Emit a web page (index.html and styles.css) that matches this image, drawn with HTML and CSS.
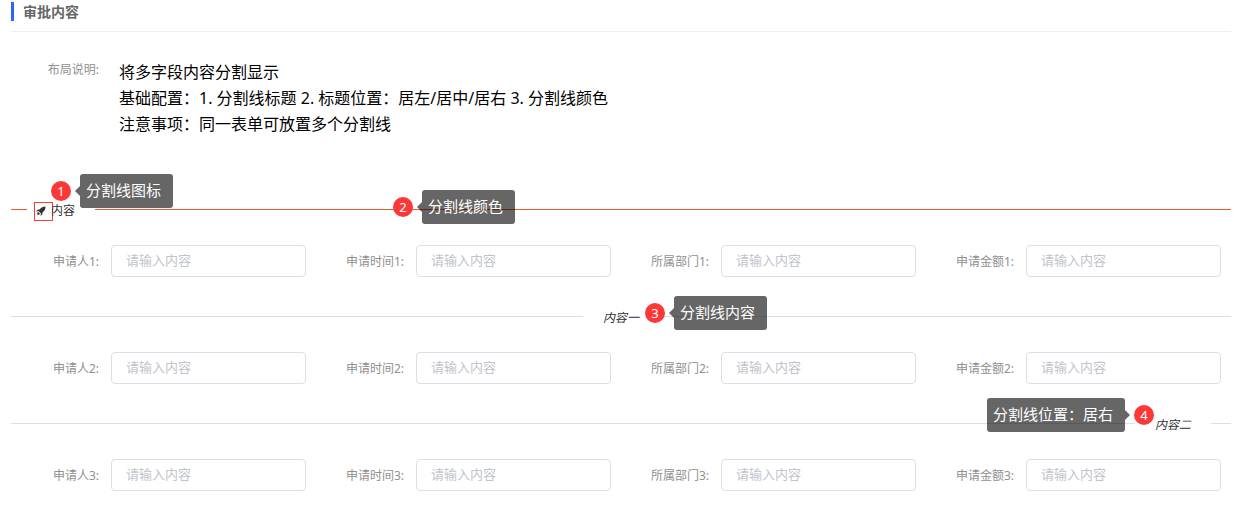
FILE: index.html
```html
<!DOCTYPE html>
<html lang="zh-CN">
<head>
    <meta charset="UTF-8">
    <meta name="viewport" content="width=device-width, initial-scale=1.0">
    <title>审批内容</title>
    <link rel="stylesheet" href="styles.css">
</head>
<body>
    <main class="page">
        <h1 class="page-title">审批内容</h1>

        <section class="intro">
            <div class="intro-label">布局说明:</div>
            <div class="intro-text">
                <p>将多字段内容分割显示</p>
                <p>基础配置：1. 分割线标题 2. 标题位置：居左/居中/居右 3. 分割线颜色</p>
                <p>注意事项：同一表单可放置多个分割线</p>
            </div>
        </section>

        <form>
            <div class="divider divider-left">
                <div class="divider-text">
                    <span class="icon-box">
                        <svg class="icon" viewBox="0 0 20 20" fill="currentColor" aria-hidden="true">
                            <path d="M19 1C14 1 10 3 7 7 4 7 2 8 0 11l5-1 5 5-1 5c3-2 4-4 4-7 4-3 6-7 6-12z"/>
                            <path d="M4 11.500c-1 1.500-1.500 3-1.500 6 3 0 4.500-.5 6-1.500z"/>
                        </svg>
                    </span>
                    内容
                </div>
                <div class="note note-icon"><span class="badge">1</span><span class="tip">分割线图标</span></div>
                <div class="note note-color"><span class="badge">2</span><span class="tip">分割线颜色</span></div>
            </div>
            <div class="fields">
                <div class="field"><label for="user1">申请人1:</label><input type="text" id="user1" placeholder="请输入内容"></div>
                <div class="field"><label for="time1">申请时间1:</label><input type="text" id="time1" placeholder="请输入内容"></div>
                <div class="field"><label for="dept1">所属部门1:</label><input type="text" id="dept1" placeholder="请输入内容"></div>
                <div class="field"><label for="amount1">申请金额1:</label><input type="text" id="amount1" placeholder="请输入内容"></div>
            </div>

            <div class="divider divider-center">
                <div class="divider-text">
                    内容一
                    <div class="note note-content"><span class="badge">3</span><span class="tip">分割线内容</span></div>
                </div>
            </div>
            <div class="fields">
                <div class="field"><label for="user2">申请人2:</label><input type="text" id="user2" placeholder="请输入内容"></div>
                <div class="field"><label for="time2">申请时间2:</label><input type="text" id="time2" placeholder="请输入内容"></div>
                <div class="field"><label for="dept2">所属部门2:</label><input type="text" id="dept2" placeholder="请输入内容"></div>
                <div class="field"><label for="amount2">申请金额2:</label><input type="text" id="amount2" placeholder="请输入内容"></div>
            </div>

            <div class="divider divider-right">
                <div class="divider-text">内容二</div>
                <div class="note note-position"><span class="badge">4</span><span class="tip">分割线位置：居右</span></div>
            </div>
            <div class="fields">
                <div class="field"><label for="user3">申请人3:</label><input type="text" id="user3" placeholder="请输入内容"></div>
                <div class="field"><label for="time3">申请时间3:</label><input type="text" id="time3" placeholder="请输入内容"></div>
                <div class="field"><label for="dept3">所属部门3:</label><input type="text" id="dept3" placeholder="请输入内容"></div>
                <div class="field"><label for="amount3">申请金额3:</label><input type="text" id="amount3" placeholder="请输入内容"></div>
            </div>
        </form>
    </main>
</body>
</html>
```
FILE: styles.css
```css
:root {
    --primary: #2b63ff;
    --accent: #f05a28;
    --red: #fc3838;
    --line: #dcdfe6;
    --label: #909090;
    --text: #303133;
}

* {
    margin: 0;
    padding: 0;
    box-sizing: border-box;
}

body {
    font-family: "Noto Sans", "Noto Sans CJK SC", sans-serif;
    font-size: 12px;
    color: var(--text);
    background: #fff;
}

.page {
    padding: 2px 20px 0 11px;
}

.page-title {
    display: flex;
    align-items: center;
    gap: 9px;
    padding-bottom: 10px;
    border-bottom: 1px solid #ebeef5;
    font-size: 14px;
    line-height: 19px;
    color: #666;
}

.page-title::before {
    content: "";
    width: 3px;
    height: 19px;
    background: var(--primary);
}

.intro {
    display: flex;
    gap: 20px;
    padding: 27px 0 61px;
}

.intro-label {
    width: 88px;
    line-height: 22px;
    text-align: right;
    color: var(--label);
}

.intro-text {
    flex: 1;
    font-size: 16px;
    line-height: 26px;
    color: #000;
}

/* divider */
.divider {
    position: relative;
    display: flex;
    align-items: center;
    height: 22px;
}

.divider::before,
.divider::after {
    content: "";
    flex: 1;
    height: 1px;
    background: var(--line);
}

.divider-text {
    position: relative;
    padding: 4px 20px 0;
    line-height: 20px;
}

.divider-left::before,
.divider-left::after {
    background: var(--accent);
}

.divider-left::before {
    flex: 0 0 16px;
}

.divider-left .divider-text {
    display: flex;
    align-items: center;
    padding-left: 7px;
}

.divider-center .divider-text,
.divider-right .divider-text {
    font-style: italic;
}

.divider-right::after {
    flex: 0 0 20px;
}

.icon-box {
    display: flex;
    align-items: center;
    width: 19px;
    height: 19px;
    padding-left: 1px;
    margin-right: -2px;
    border: 1px solid var(--red);
}

.icon {
    width: 10px;
    height: 10px;
}

/* form fields */
.fields {
    display: grid;
    grid-template-columns: repeat(4, minmax(0, 1fr));
    padding: 25px 0 28px;
}

.field {
    display: flex;
    align-items: center;
    gap: 12px;
    padding-right: 10px;
}

.field label {
    flex: 0 0 88px;
    text-align: right;
    color: var(--label);
}

.field input {
    flex: 1;
    min-width: 0;
    height: 32px;
    padding: 0 14px 2px;
    border: 1px solid var(--line);
    border-radius: 4px;
    font-family: inherit;
    font-size: 13px;
    color: #606266;
    outline: none;
}

.field input::placeholder {
    color: #c0c4cc;
}

.field input:focus {
    border-color: var(--primary);
}

/* numbered notes over the form */
.note {
    position: absolute;
    z-index: 1;
    display: flex;
    align-items: center;
    gap: 9px;
    font-style: normal;
    white-space: nowrap;
}

.badge {
    width: 20px;
    height: 20px;
    border-radius: 50%;
    background: var(--red);
    color: #fff;
    font-size: 13px;
    line-height: 20px;
    text-align: center;
}

.tip {
    position: relative;
    padding: 0 12px 2px 6px;
    border-radius: 3px;
    background: rgba(0, 0, 0, 0.6);
    color: #fff;
    font-size: 15px;
    line-height: 32px;
}

.tip::before {
    content: "";
    position: absolute;
    top: 12px;
    right: 100%;
    border: 5px solid transparent;
    border-left-width: 0;
    border-right-color: rgba(0, 0, 0, 0.6);
}

.note-icon {
    top: -24px;
    left: 40px;
}

.note-color {
    top: -8px;
    left: 382px;
}

.note-content {
    top: -8px;
    left: 62px;
}

.note-position {
    top: -14px;
    right: 77px;
    flex-direction: row-reverse;
}

.note-position .tip::before {
    right: auto;
    left: 100%;
    border-width: 5px 0 5px 5px;
    border-color: transparent transparent transparent rgba(0, 0, 0, 0.6);
}
```
